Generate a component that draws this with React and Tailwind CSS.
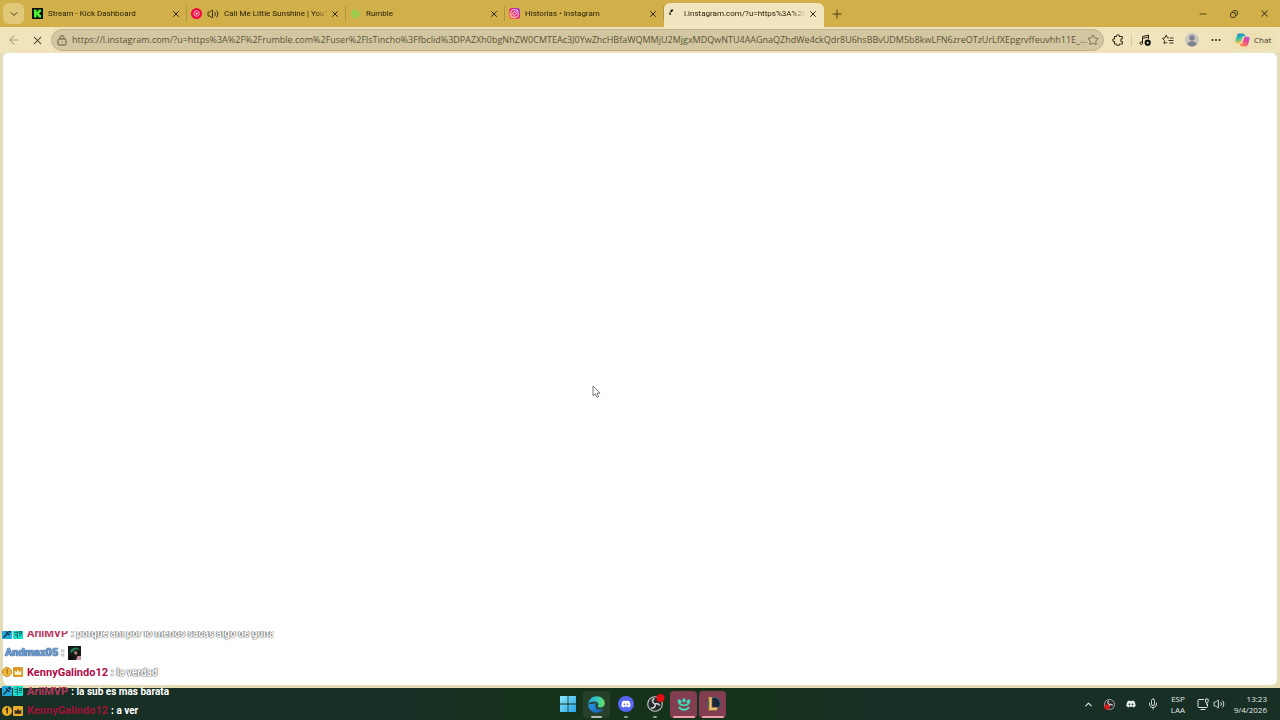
import React from "react";
import {
  ArrowLeft,
  ChevronDown,
  ChevronUp,
  Copy,
  Ellipsis,
  Mic,
  Minus,
  Plus,
  Star,
  Volume2,
  X,
} from "lucide-react";
import { FaDiscord, FaInstagram } from "react-icons/fa";

const URL =
  "https://l.instagram.com/?u=https%3A%2F%2Frumble.com%2Fuser%2FlsTincho%3Ffbclid%3DPAZXh0bgNhZW0CMTEAc3J0YwZhcHBfaWQMMjU2MjgxMDQwNTU4AAGnaQZhdWe4ckQdr8U6hsBBvUDM5b8kwLFN6zreOTzUrLfXEpgrvffeuvhh11E_...";

function KickIcon() {
  return (
    <svg width="11" height="11" viewBox="0 0 11 11" className="shrink-0">
      <rect width="11" height="11" fill="#061006" />
      <path d="M2 1.5h2.5v2.2h1V2.6h1.2V1.5h2.4V4H8v1H7v1h1v1h1.1v2.5H6.7V8.4H5.500V7.300h-1v2.200H2z" fill="#4df32d" />
    </svg>
  );
}

function YouTubeMusicIcon() {
  return (
    <svg width="11" height="11" viewBox="0 0 12 12" className="shrink-0">
      <circle cx="6" cy="6" r="6" fill="#f2083f" />
      <circle cx="6" cy="6" r="3" fill="none" stroke="#ffd5df" strokeWidth="0.9" />
      <path d="M5.200 4.500v3L7.700 6z" fill="#fff" />
    </svg>
  );
}

function RumbleIcon() {
  return (
    <svg width="11" height="12" viewBox="0 0 12 12" className="shrink-0">
      <path
        d="M3.200 1.700C5.500 1.700 8.300 3 10 5.100c.6.700.6 1.300 0 2C8.300 9 5.700 10.400 3.300 10.400 1.700 10 1.300 3 3.200 1.700z"
        fill="#9ccc4c"
        stroke="#9ccc4c"
        strokeWidth="1.200"
      />
      <path d="M5 4.700v2.700L7.300 6z" fill="#b3bf4a" />
    </svg>
  );
}

function InstagramIcon() {
  return (
    <span className="flex size-[11px] shrink-0 items-center justify-center rounded-[3px] bg-gradient-to-tr from-[#ff8a2e] via-[#f0106e] to-[#8a1be8] text-white">
      <FaInstagram size={9} />
    </span>
  );
}

function LoadingIcon() {
  return (
    <svg width="11" height="11" viewBox="0 0 11 11" className="shrink-0">
      <path d="M2.500 3.800 4.800 1.800" fill="none" stroke="#1f1a0c" strokeWidth="1.800" />
      <path d="M1.700 4.600 2.400 6.800" fill="none" stroke="#1f1a0c" strokeWidth="1.500" />
    </svg>
  );
}

function CopilotIcon() {
  return (
    <svg width="15" height="14" viewBox="0 0 15 14">
      <defs>
        <linearGradient id="copilotLeft" x1="0" y1="0" x2="0.300" y2="1">
          <stop offset="0" stopColor="#1779e8" />
          <stop offset="0.500" stopColor="#27bfae" />
          <stop offset="1" stopColor="#f5c23b" />
        </linearGradient>
        <linearGradient id="copilotRight" x1="1" y1="0" x2="0.300" y2="1">
          <stop offset="0" stopColor="#a853ea" />
          <stop offset="0.500" stopColor="#ee4a94" />
          <stop offset="1" stopColor="#ff8b4b" />
        </linearGradient>
      </defs>
      <path d="M10.500 3.200C10 1.400 9.300.6 7.700.6H4.300c-1.200 0-1.900.8-2.300 2L.6 7.200C0 9.200.8 10.300 2.300 10.300h2.100c1 0 1.400-.6 1.700-1.500l1.300-4.300c.3-.8.700-1.300 1.500-1.300z" fill="url(#copilotLeft)" />
      <path d="M4.500 10.800c.5 1.800 1.200 2.600 2.800 2.600h3.400c1.200 0 1.900-.8 2.300-2l1.400-4.600c.6-2-.2-3.100-1.700-3.100h-2.100c-1 0-1.400.6-1.700 1.500L7.600 9.500c-.3.800-.7 1.300-1.500 1.300z" fill="url(#copilotRight)" />
    </svg>
  );
}

function LockIcon() {
  return (
    <svg width="10" height="11" viewBox="0 0 10 11" fill="none" stroke="#5d553c" strokeWidth="1" className="shrink-0">
      <rect x="1" y="4" width="8" height="6" rx="1.300" />
      <path d="M3 4V2.600a2 2 0 0 1 4 0V4" />
      <circle cx="5" cy="7" r="0.600" fill="#5d553c" stroke="none" />
    </svg>
  );
}

function ExtensionsIcon() {
  return (
    <svg width="12" height="12" viewBox="0 0 12 12" fill="none" stroke="#3a331f" strokeWidth="1.100" strokeLinejoin="round">
      <path d="M2.500 2.500h2c0-2.300 3-2.300 3 0h2.800v2.300c-2.200 0-2.200 2.800 0 2.800V10H7.500c0 1.900-3 1.900-3 0h-2V7.600c-2.300 0-2.300-2.800 0-2.800z" />
    </svg>
  );
}

function MediaIcon() {
  return (
    <svg width="12" height="12" viewBox="0 0 12 12" fill="none" stroke="#2b2515" strokeWidth="1">
      <path d="M3.500 9V2.600L9.500 1v4M3.500 4.500l6-1.600" />
      <circle cx="2.300" cy="9.200" r="1.300" />
      <circle cx="8.700" cy="8.700" r="3.100" fill="#100d06" stroke="none" />
      <circle cx="8.700" cy="8.700" r="1" fill="#fff" stroke="none" />
    </svg>
  );
}

function FavoritesIcon() {
  return (
    <svg width="12" height="12" viewBox="0 0 12 12" fill="none" stroke="#3a331f" strokeWidth="1" strokeLinejoin="round">
      <path d="M7 3.900 5.400 3.800 4.200 1 3 3.800.6 4.300l1.800 2.100-.4 3.200 2.300-1.200 1 .5" />
      <path d="M8 4h3.500M6.500 6.500h5M7.500 9h4" />
    </svg>
  );
}

function ProfileIcon() {
  return (
    <svg width="14" height="14" viewBox="0 0 14 14">
      <circle cx="7" cy="7" r="7" fill="#c9c5bd" />
      <circle cx="7" cy="5" r="2.700" fill="#7e8390" />
      <path d="M2.500 11.500C3 8.900 4.500 8.500 7 8.500s4 .4 4.500 3C9 14 5 14 2.500 11.500z" fill="#7e8390" />
    </svg>
  );
}

const tabs = [
  { title: "Stream - Kick Dashboard", icon: <KickIcon /> },
  { title: "Call Me Little Sunshine | YouT", icon: <YouTubeMusicIcon />, audio: true },
  { title: "Rumble", icon: <RumbleIcon /> },
  { title: "Historias • Instagram", icon: <InstagramIcon /> },
  { title: "l.instagram.com/?u=https%3A%2F", icon: <LoadingIcon />, active: true },
];

function Tab({ title, icon, audio, active }) {
  return (
    <div
      className={
        active
          ? "mt-[3px] flex w-[160px] items-center rounded-t-md bg-[#f1e5bf] pr-[4px] pb-[3px] pl-[4px]"
          : "my-[6px] flex w-[159px] items-center border-r border-[#b0943e] pr-[3px] pl-[4px]"
      }
    >
      {icon}
      {audio && <Volume2 size={12} strokeWidth={2} className="ml-[5px] shrink-0 text-[#3b3012]" />}
      <button
        type="button"
        className="ml-[5px] min-w-0 flex-1 overflow-hidden text-left font-[Roboto,sans-serif] text-[8px] leading-[14px] whitespace-nowrap text-[#282008] [mask-image:linear-gradient(to_right,#000_88%,transparent)]"
      >
        {title}
      </button>
      <button type="button" aria-label={"Close " + title} className="flex size-[14px] shrink-0 items-center justify-center">
        <X size={10} strokeWidth={2.4} className="text-[#33290d]" />
      </button>
    </div>
  );
}

function TabStrip() {
  return (
    <header className="flex h-[27px] shrink-0 bg-[#d1b04a]">
      <button
        type="button"
        aria-label="Tab actions"
        className="mt-[3px] ml-[3px] flex size-[21px] items-center justify-center rounded-md bg-[#e1c879]"
      >
        <ChevronDown size={12} strokeWidth={2} className="text-[#42371a]" />
      </button>
      <nav className="ml-[4px] flex">
        {tabs.map((tab) => (
          <Tab key={tab.title} {...tab} />
        ))}
      </nav>
      <button type="button" aria-label="New tab" className="ml-[3px] flex w-[20px] items-center justify-center">
        <Plus size={14} strokeWidth={1.7} className="text-[#4b3d17]" />
      </button>
      <div className="ml-auto flex text-[#43371a]">
        <button type="button" aria-label="Minimize" className="flex w-[30px] items-center justify-center">
          <Minus size={10} strokeWidth={2.2} />
        </button>
        <button type="button" aria-label="Restore" className="flex w-[31px] items-center justify-center">
          <Copy size={8} strokeWidth={3} className="-scale-x-100" />
        </button>
        <button type="button" aria-label="Close window" className="flex w-[31px] items-center justify-center">
          <X size={11} strokeWidth={2.2} />
        </button>
      </div>
    </header>
  );
}

function Toolbar() {
  return (
    <div className="flex h-[26px] shrink-0 items-center bg-[#f0e4bd] pr-[3px] pl-[4px] text-[#3a331f]">
      <button type="button" aria-label="Back" className="flex w-[19px] justify-center">
        <ArrowLeft size={14} strokeWidth={1.8} className="text-[#aa9f78]" />
      </button>
      <button type="button" aria-label="Stop loading" className="ml-[4px] flex w-[20px] justify-center">
        <X size={13} strokeWidth={1.9} />
      </button>
      <div className="ml-[4px] flex h-[22px] flex-1 items-center rounded-full border border-[#bfb48d] bg-[#d2c7a0] pr-[4px] pl-[5px]">
        <LockIcon />
        <input
          type="text"
          aria-label="Address"
          defaultValue={URL}
          className="ml-[5px] min-w-0 flex-1 bg-transparent text-[9px] leading-[16px] text-[#5c5438] outline-none"
        />
        <button type="button" aria-label="Add to favorites">
          <Star size={12} strokeWidth={1.8} className="text-[#70674a]" />
        </button>
      </div>
      <div className="ml-[4px] flex items-center">
        <button type="button" aria-label="Extensions" className="flex w-[20px] justify-center">
          <ExtensionsIcon />
        </button>
        <span className="mr-px ml-[3px] h-[11px] w-px bg-[#d3c69b]" />
        <button type="button" aria-label="Media" className="flex w-[23px] justify-center">
          <MediaIcon />
        </button>
        <button type="button" aria-label="Favorites" className="flex w-[24px] justify-center">
          <FavoritesIcon />
        </button>
        <button type="button" aria-label="Profile" className="flex w-[24px] justify-center">
          <ProfileIcon />
        </button>
        <button type="button" aria-label="Settings and more" className="flex w-[24px] justify-center">
          <Ellipsis size={12} strokeWidth={2.4} />
        </button>
        <button
          type="button"
          className="ml-[3px] flex h-[20px] w-[46px] items-center gap-[4px] rounded-md bg-[#ede0b4] pl-[4px] text-[8px]"
        >
          <CopilotIcon />
          Chat
        </button>
      </div>
    </div>
  );
}

function SwordBadge() {
  return (
    <svg width="10" height="10" viewBox="0 0 10 10">
      <rect width="10" height="10" rx="1" fill="#21a9dc" />
      <path d="m1.500 8.500 4-4M4 2.500 7.500 6M6 2h2v2" stroke="#123246" strokeWidth="1.500" fill="none" />
    </svg>
  );
}

function GiftBadge() {
  return (
    <svg width="10" height="10" viewBox="0 0 10 10">
      <rect width="10" height="10" rx="1" fill="#13e0cc" />
      <path d="M4.500 1v8M1.500 3.500h3M1.500 6h3M6.500 2.500h2v2h-2zM6 6.500l2.500-.5" stroke="#0c6e70" strokeWidth="1.100" fill="none" />
    </svg>
  );
}

function CoinBadge() {
  return (
    <svg width="10" height="10" viewBox="0 0 10 10">
      <circle cx="5" cy="5" r="5" fill="#edaf25" />
      <path d="M3.700 3.700 5.200 2.500v5" stroke="#332a12" strokeWidth="1.400" fill="none" />
    </svg>
  );
}

function CrownBadge() {
  return (
    <svg width="10" height="10" viewBox="0 0 10 10">
      <rect width="10" height="10" rx="1" fill="#e9ae2c" />
      <path d="M1.700 3.500 3.500 5 5 2.800 6.500 5l1.800-1.500v4.200H1.700z" fill="#332a12" />
    </svg>
  );
}

function CoinBadgeLight() {
  return (
    <svg width="10" height="10" viewBox="0 0 10 10">
      <circle cx="5" cy="5" r="4.500" fill="#f2b83b" stroke="#c98f20" />
      <path d="M3.900 3.700 5.200 2.700v4.600" stroke="#a87417" strokeWidth="1.100" fill="none" />
    </svg>
  );
}

function CrownBadgeLight() {
  return (
    <svg width="10" height="10" viewBox="0 0 10 10">
      <rect width="10" height="10" rx="1" fill="#d99c2c" />
      <path d="M1.700 3.500 3.500 5 5 2.800 6.500 5l1.800-1.500v4.200H1.700z" fill="#fff3d2" />
    </svg>
  );
}

function Emote() {
  return (
    <svg width="13" height="14" viewBox="0 0 13 14">
      <rect width="13" height="14" fill="#161a19" />
      <path d="M2 5C4 1 9 0 12 4L8 3.500 3 7z" fill="#1f7a4b" />
      <path d="M6.500 5.500c1.500-.8 3 0 3 2l-1.500 1.500-2-1.500z" fill="#b27a72" />
      <path d="M9.500 10H13v4H8z" fill="#c9929b" />
      <path d="M1 10l4 1v3H1z" fill="#0c0e0d" />
    </svg>
  );
}

const messages = [
  { id: 1, user: "AriiMVP", color: "text-[#b8395f]", text: "porque ahi por lo menos sacas algo de guita", light: true, badges: <><SwordBadge /><GiftBadge /></> },
  { id: 2, user: "Andmax05", color: "text-[#6f9fd8]", light: true, emote: true },
  { id: 3, user: "KennyGalindo12", color: "text-[#b00b45]", text: "la verdad", light: true, badges: <><CoinBadgeLight /><CrownBadgeLight /></> },
  { id: 4, user: "AriiMVP", color: "text-[#b8395f]", text: "la sub es mas barata", badges: <><SwordBadge /><GiftBadge /></> },
  { id: 5, user: "KennyGalindo12", color: "text-[#a01037]", text: "a ver", badges: <><CoinBadge /><CrownBadge /></> },
];

function ChatOverlay() {
  return (
    <div className="absolute bottom-0 left-0 flex h-[89px] items-end overflow-hidden">
      <ul className="flex h-[96px] shrink-0 flex-col justify-between pl-[2px] font-[Roboto,sans-serif] text-[11px] leading-[19px] text-white">
        {messages.map((m) => (
          <li key={m.id} className="flex h-[19px] items-center whitespace-nowrap">
            {m.badges && <span className="mr-[4px] flex gap-px">{m.badges}</span>}
            <span
              className={
                m.badges
                  ? "font-bold " + m.color
                  : "ml-[3px] font-bold [text-shadow:0_0_1px_#24466f,0_0_1px_#24466f] " + m.color
              }
            >
              {m.user}
            </span>
            <span
              className={
                m.light
                  ? "ml-[3px] text-[10px] font-bold [text-shadow:0_0_1px_#555,0_0_1px_#555,0_0_2px_#777]"
                  : "ml-[3px] text-[10px] font-bold"
              }
            >
              : {m.text}
            </span>
            {m.emote && (
              <span className="ml-[4px]">
                <Emote />
              </span>
            )}
          </li>
        ))}
      </ul>
    </div>
  );
}

function WindowsIcon() {
  return (
    <svg width="16" height="16" viewBox="0 0 16 16">
      <defs>
        <linearGradient id="windowsBlue" x1="0" y1="0" x2="1" y2="1">
          <stop offset="0" stopColor="#8ce5fb" />
          <stop offset="1" stopColor="#27a5e8" />
        </linearGradient>
      </defs>
      <path d="M0 0h7.600v7.600H0zM8.400 0H16v7.600H8.400zM0 8.400h7.600V16H0zM8.400 8.400H16V16H8.400z" fill="url(#windowsBlue)" />
    </svg>
  );
}

function EdgeIcon() {
  return (
    <svg width="17" height="17" viewBox="0 0 17 17">
      <defs>
        <linearGradient id="edgeTop" x1="0" y1="0.500" x2="1" y2="0.500">
          <stop offset="0" stopColor="#28a9e4" />
          <stop offset="0.500" stopColor="#35c6c3" />
          <stop offset="1" stopColor="#69df56" />
        </linearGradient>
        <linearGradient id="edgeBottom" x1="0" y1="0" x2="1" y2="1">
          <stop offset="0" stopColor="#2a9be6" />
          <stop offset="1" stopColor="#1560b0" />
        </linearGradient>
      </defs>
      <path d="M.2 8.500C.2 13 3.800 16.800 8.600 16.800c2.800 0 5.300-1.300 6.800-3.500.2-.4-.1-.6-.5-.4-3 1.500-7.600.6-7.600-3.200 0-1.500.9-2.400 1.800-2.700z" fill="url(#edgeBottom)" />
      <path d="M.2 8.500C.5 3.500 4.200.2 8.600.2c4.700 0 8.200 3.300 8.200 7 0 2.700-2 4.400-4.500 4.400-1.800 0-2.700-.7-2.700-1.300 0-.5.700-.9.700-2 0-1.600-1.600-2.900-4-2.900C3.600 5.400 1 6.500.2 8.500z" fill="url(#edgeTop)" />
    </svg>
  );
}

function DiscordIcon() {
  return (
    <span className="flex size-[16px] items-center justify-center rounded-full bg-[#5865f2] text-white">
      <FaDiscord size={10} />
    </span>
  );
}

function ObsIcon({ size = 16, dot }) {
  return (
    <svg width={size} height={size} viewBox="0 0 16 16" overflow="visible">
      <circle cx="8" cy="8" r="7.300" fill="#25282a" stroke="#c8cbca" strokeWidth="1.100" />
      <path d="M7.500 2.500C4.700 3.500 5 7 8 8M12.700 9.500C11 7 8 8 8 8M4 12c3 .7 4.800-1.500 4-4" fill="none" stroke="#c8cbca" strokeWidth="1.700" />
      {dot === "top" && <circle cx="13.500" cy="2" r="4" fill="#e60a12" />}
      {dot === "bottom" && <circle cx="4.500" cy="11.500" r="4" fill="#d7181c" />}
    </svg>
  );
}

function PlantIcon() {
  return (
    <svg width="14" height="14" viewBox="0 0 14 14">
      <path d="M7 .8 9 3.200 7 6 5 3.200z" fill="#3fdcba" />
      <path d="M1.500 2.800C1.700 6.300 3.700 8.400 7 8.400s5.300-2.100 5.500-5.600M1.500 2.800 4.300 5.300M12.500 2.800 9.700 5.300M2 10c2.600 3.700 7.400 3.700 10 0" fill="none" stroke="#3fdcba" strokeWidth="1.900" strokeLinejoin="round" />
    </svg>
  );
}

function LeagueIcon() {
  return (
    <svg width="16" height="16" viewBox="0 0 16 16">
      <circle cx="8.800" cy="7.700" r="6.500" fill="#17283c" stroke="#3c6f83" />
      <path d="M2.500 1h5.300l-.8 1.200v9h6L11.800 14.500H2.600l1.200-1.600V2.300z" fill="#e9bd70" stroke="#7d5c2d" strokeWidth="0.600" />
    </svg>
  );
}

const apps = [
  { name: "Start", icon: <WindowsIcon /> },
  { name: "Edge", icon: <EdgeIcon />, box: "bg-[#26402b]", bar: "h-[2px] w-[11px] bg-[#b3bdb4]" },
  { name: "Discord", icon: <DiscordIcon />, bar: "h-[2px] w-[4px] bg-[#8d9a92]" },
  { name: "OBS Studio", icon: <ObsIcon dot="top" />, bar: "h-[2px] w-[4px] bg-[#8d9a92]" },
  { name: "Stream helper", icon: <PlantIcon />, box: "bg-[#823e50]", bar: "h-[2px] w-[22px] bg-[#f19cab]" },
  { name: "League of Legends", icon: <LeagueIcon />, box: "bg-[#823e50]", bar: "h-[2px] w-[22px] bg-[#f19cab]" },
];

function NetworkIcon() {
  return (
    <svg width="12" height="12" viewBox="0 0 12 12" fill="none" stroke="#dbe3de" strokeWidth="1">
      <path d="M7 1.500H2a1 1 0 0 0-1 1v6a1 1 0 0 0 1 1h7.500a1 1 0 0 0 1-1V6M3.500 11.500h5" />
      <path d="M8.500 1v2.500a1.300 1.300 0 0 0 2.600 0V1zM9.800 5v2" />
    </svg>
  );
}

function Taskbar() {
  return (
    <footer className="grid h-[32px] shrink-0 grid-cols-[1fr_auto_1fr] items-center bg-[linear-gradient(to_right,#172f24_32%,#15331b_42%,#15331b_58%,#172f24_68%)] text-[#e4eae6]">
      <div />
      <div className="flex gap-[2px]">
        {apps.map((app) => (
          <button
            key={app.name}
            type="button"
            aria-label={app.name}
            className={"flex h-[27px] w-[27px] flex-col items-center rounded-[4px] pt-[5px] " + (app.box || "")}
          >
            <span className="flex h-[17px] items-center">{app.icon}</span>
            {app.bar && <span className={"mt-auto rounded-full " + app.bar} />}
          </button>
        ))}
      </div>
      <div className="flex items-center justify-end pr-[13px] text-[8px] leading-[11px]">
        <button type="button" aria-label="Hidden icons" className="flex w-[21px] justify-center">
          <ChevronUp size={11} strokeWidth={2.4} />
        </button>
        <button type="button" aria-label="OBS Studio tray" className="flex w-[21px] justify-center">
          <ObsIcon size={11} dot="bottom" />
        </button>
        <button type="button" aria-label="Discord tray" className="flex w-[22px] justify-center">
          <FaDiscord size={10} />
        </button>
        <button type="button" aria-label="Microphone" className="flex w-[21px] justify-center">
          <Mic size={12} strokeWidth={1.8} />
        </button>
        <button type="button" className="ml-[3px] flex w-[24px] flex-col items-center">
          <span>ESP</span>
          <span>LAA</span>
        </button>
        <button type="button" aria-label="Network and volume" className="ml-[7px] flex items-center gap-[4px]">
          <NetworkIcon />
          <Volume2 size={12} strokeWidth={1.8} />
        </button>
        <button type="button" className="ml-[7px] flex w-[35px] flex-col items-end">
          <span>13:23</span>
          <span>9/4/2026</span>
        </button>
      </div>
    </footer>
  );
}

function Cursor() {
  return (
    <svg width="9" height="14" viewBox="0 0 9 14" className="absolute top-[385px] left-[592px]">
      <path d="M1 1v10l2.300-2.200L5 12.500l1.600-.8L5 8.200h3z" fill="#fff" stroke="#555" strokeWidth="0.800" />
    </svg>
  );
}

export default function App() {
  return (
    <div className="relative flex h-screen flex-col overflow-hidden bg-[#e5dbb5] font-['Open_Sans','Noto_Sans',sans-serif]">
      <TabStrip />
      <Toolbar />
      <main className="mx-[3px] mb-[3px] flex-1 rounded-[5px] bg-white" />
      <Taskbar />
      <ChatOverlay />
      <Cursor />
    </div>
  );
}
